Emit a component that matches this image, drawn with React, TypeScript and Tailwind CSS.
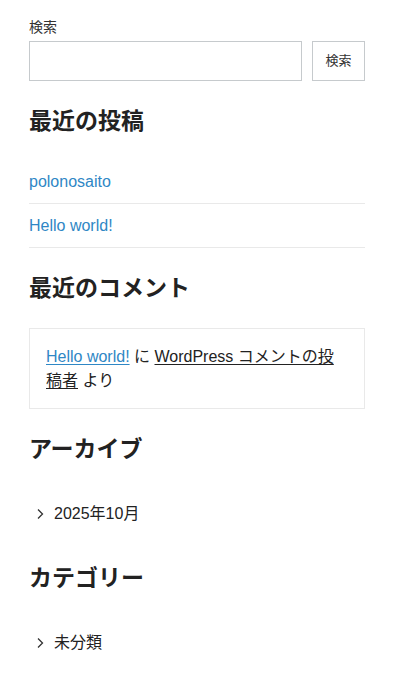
import React from 'react';

const font = { fontFamily: '"Liberation Sans", "Noto Sans CJK JP", sans-serif' };

const Chevron: React.FC = () => (
  <svg width="10" height="12" viewBox="0 0 10 12" className="shrink-0 text-[#333]">
    <path d="M3 1.5 L7.5 6 L3 10.5" fill="none" stroke="currentColor" strokeWidth="1.3" />
  </svg>
);

const Heading: React.FC<{ children: React.ReactNode }> = ({ children }) => (
  <h2 className="text-[23px] font-bold leading-[32px] text-[#222]">{children}</h2>
);

const App: React.FC = () => {
  const posts = ['polonosaito', 'Hello world!'];

  return (
    <div className="min-h-screen bg-white text-[#333]" style={font}>
      <div className="px-[29px] pt-[17px] w-[394px]">
        {/* search */}
        <label className="block text-[14px] leading-[20px] text-[#333]">検索</label>
        <div className="mt-[4px] flex gap-[10px]">
          <input
            type="text"
            className="h-[40px] flex-1 border border-[#c6cacd] bg-white px-2 outline-none"
          />
          <button className="h-[40px] w-[53px] border border-[#c6cacd] bg-white text-[13px] text-[#333]">
            検索
          </button>
        </div>

        {/* recent posts */}
        <div className="mt-[24px]">
          <Heading>最近の投稿</Heading>
          <ul className="mt-[23px]">
            {posts.map((p) => (
              <li key={p} className="border-b border-[#e9e9e9] py-[10px] text-[16px] leading-[23px]">
                <a className="text-[#2f87c5]">{p}</a>
              </li>
            ))}
          </ul>
        </div>

        {/* recent comments */}
        <div className="mt-[24px]">
          <Heading>最近のコメント</Heading>
          <div className="mt-[24px] border border-[#e9e9e9] px-[16px] pt-[16px] pb-[15px] text-[16px] leading-[24px] text-[#222]">
            <a className="text-[#2f87c5] underline underline-offset-2">Hello world!</a> に{' '}
            <a className="underline underline-offset-2">WordPress コメントの投稿者</a> より
          </div>
        </div>

        {/* archives */}
        <div className="mt-[24px]">
          <Heading>アーカイブ</Heading>
          <ul className="mt-[37px]">
            <li className="flex items-center gap-[9px] pl-[6px] text-[16px] leading-[24px] text-[#222]">
              <Chevron />
              <span>2025年10月</span>
            </li>
          </ul>
        </div>

        {/* categories */}
        <div className="mt-[36px]">
          <Heading>カテゴリー</Heading>
          <ul className="mt-[37px]">
            <li className="flex items-center gap-[9px] pl-[6px] text-[16px] leading-[24px] text-[#222]">
              <Chevron />
              <span>未分類</span>
            </li>
          </ul>
        </div>
      </div>
    </div>
  );
};

export default App;
